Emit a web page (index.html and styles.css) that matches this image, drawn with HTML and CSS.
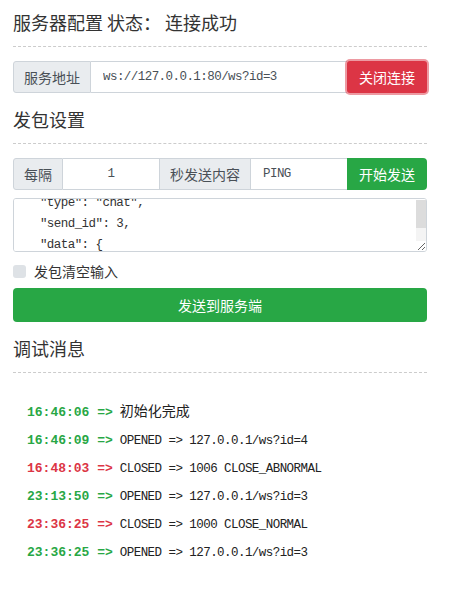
FILE: index.html
```html
<!DOCTYPE html>
<html lang="zh-CN">
<head>
  <meta charset="UTF-8">
  <meta name="viewport" content="width=device-width, initial-scale=1.0">
  <title>WebSocket 调试</title>
  <link rel="stylesheet" href="styles.css">
</head>
<body>

<div class="panel">
  <h3 class="section-title first">服务器配置 状态： 连接成功</h3>
  <div class="input-group">
    <span class="addon">服务地址</span>
    <input class="field" type="text" value="ws://127.0.0.1:80/ws?id=3">
    <button class="btn btn-danger focused">关闭连接</button>
  </div>

  <h3 class="section-title">发包设置</h3>
  <div class="input-group">
    <span class="addon">每隔</span>
    <input class="field center" type="text" value="1">
    <span class="addon">秒发送内容</span>
    <input class="field" type="text" value="PING">
    <button class="btn btn-success">开始发送</button>
  </div>

  <div class="payload-wrap">
    <textarea class="payload" id="payload">{
  "type": "chat",
  "send_id": 3,
  "data": {
    "content": "hello",
    "to_id": 4
  }
}</textarea>
    <div class="fake-scroll"></div>
  </div>

  <label class="check">
    <input type="checkbox">
    <span>发包清空输入</span>
  </label>

  <button class="btn btn-success btn-block">发送到服务端</button>

  <h3 class="section-title">调试消息</h3>
  <ul class="log">
    <li><span class="time ok">16:46:06 =&gt;</span> <span class="cn">初始化完成</span></li>
    <li><span class="time ok">16:46:09 =&gt;</span> OPENED =&gt; 127.0.0.1/ws?id=4</li>
    <li><span class="time err">16:48:03 =&gt;</span> CLOSED =&gt; 1006 CLOSE_ABNORMAL</li>
    <li><span class="time ok">23:13:50 =&gt;</span> OPENED =&gt; 127.0.0.1/ws?id=3</li>
    <li><span class="time err">23:36:25 =&gt;</span> CLOSED =&gt; 1000 CLOSE_NORMAL</li>
    <li><span class="time ok">23:36:25 =&gt;</span> OPENED =&gt; 127.0.0.1/ws?id=3</li>
  </ul>
</div>

<script>
  // textarea was scrolled a little in the capture
  document.getElementById('payload').scrollTop = 33;
</script>

</body>
</html>
```

FILE: styles.css
```css
body {
  margin: 0;
  font-family: "Noto Sans CJK SC", "Liberation Sans", sans-serif;
  color: #333;
  background: #fff;
}

.panel {
  width: 414px;
  margin-left: 13px;
}

.section-title {
  margin: 13px 0 14px;
  padding: 0 0 11px;
  font-size: 18px;
  font-weight: normal;
  line-height: 26px;
  border-bottom: 1px dashed #ccc;
}

.section-title.first {
  margin-top: 9px;
}

.input-group {
  display: flex;
  height: 32px;
}

.addon {
  display: flex;
  align-items: center;
  padding: 0 10px;
  font-size: 14px;
  color: #495057;
  background: #e9ecef;
  border: 1px solid #ced4da;
  white-space: nowrap;
}

.input-group .addon:first-child {
  border-radius: 3px 0 0 3px;
}

.field {
  flex: 1;
  min-width: 0;
  height: 32px;
  box-sizing: border-box;
  margin: 0;
  padding: 0 12px;
  font-family: "Liberation Mono", monospace;
  font-size: 12.5px;
  letter-spacing: -0.55px;
  color: #495057;
  border: 1px solid #ced4da;
  border-left: none;
  border-right: none;
  outline: none;
}

.field.center {
  text-align: center;
}

.btn {
  margin: 0;
  padding: 0 12px;
  font-family: "Noto Sans CJK SC", sans-serif;
  font-size: 14px;
  color: #fff;
  border: none;
  border-radius: 0 4px 4px 0;
  cursor: pointer;
  white-space: nowrap;
}

.btn-danger {
  background: #dc3545;
}

.btn-danger.focused {
  border-radius: 3px;
  box-shadow: 0 0 0 2px rgba(220, 53, 69, 0.5);
}

.btn-success {
  background: #28a745;
}

.payload-wrap {
  position: relative;
  margin-top: 8px;
}

.payload {
  display: block;
  width: 100%;
  height: 54px;
  box-sizing: border-box;
  margin: 0;
  padding: 6px 12px;
  font-family: "Liberation Mono", monospace;
  font-size: 12.5px;
  letter-spacing: -0.55px;
  line-height: 21px;
  color: #333;
  border: 1px solid #ced4da;
  border-radius: 3px;
  resize: vertical;
  outline: none;
}

/* scrollbar of the textarea as it showed in the capture */
.fake-scroll {
  position: absolute;
  top: 2px;
  right: 1px;
  width: 10px;
  height: 41px;
  background: linear-gradient(#dcdcdc 0, #dcdcdc 28px, #f4f4f4 28px);
}

.check {
  display: flex;
  align-items: center;
  gap: 8px;
  height: 18px;
  margin-top: 10px;
  font-size: 14px;
}

.check input {
  appearance: none;
  width: 13px;
  height: 13px;
  margin: 0;
  background: #dee2e6;
  border-radius: 3px;
}

.btn-block {
  display: block;
  width: 100%;
  height: 34px;
  margin-top: 8px;
  border-radius: 4px;
}

.log {
  list-style: none;
  margin: 0;
  padding: 9px 0 0 14px;
  font-family: "Liberation Mono", monospace;
  font-size: 12.5px;
  letter-spacing: -0.55px;
  line-height: 28px;
  color: #222;
}

.log .time {
  font-size: 13px;
  font-weight: bold;
  letter-spacing: 0;
}

.log .ok {
  color: #28a745;
}

.log .err {
  color: #dc3545;
}

.log .cn {
  font-family: "Noto Sans CJK SC", sans-serif;
  font-size: 14px;
  letter-spacing: 0;
}
```
